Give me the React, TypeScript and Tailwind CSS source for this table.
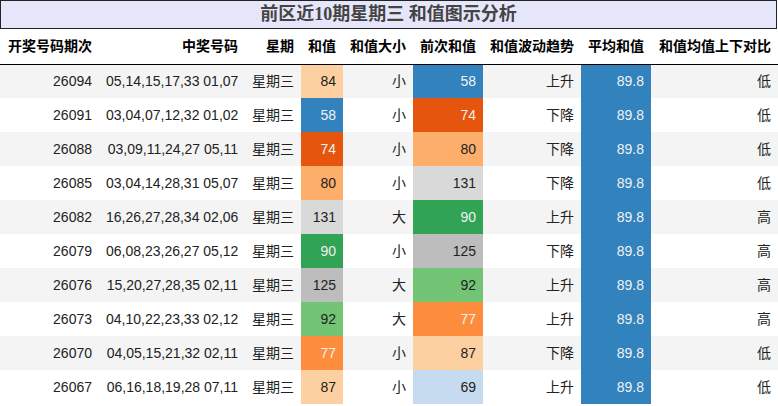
import {FC} from "react";

type Row = {
    issue: string,
    numbers: string,
    week: string,
    sum: number,
    size: string,
    prev: number,
    trend: string,
    avg: string,
    compare: string
}

const rows: Row[] = [
    {issue: "26094", numbers: "05,14,15,17,33 01,07", week: "星期三", sum: 84, size: "小", prev: 58, trend: "上升", avg: "89.8", compare: "低"},
    {issue: "26091", numbers: "03,04,07,12,32 01,02", week: "星期三", sum: 58, size: "小", prev: 74, trend: "下降", avg: "89.8", compare: "低"},
    {issue: "26088", numbers: "03,09,11,24,27 05,11", week: "星期三", sum: 74, size: "小", prev: 80, trend: "下降", avg: "89.8", compare: "低"},
    {issue: "26085", numbers: "03,04,14,28,31 05,07", week: "星期三", sum: 80, size: "小", prev: 131, trend: "下降", avg: "89.8", compare: "低"},
    {issue: "26082", numbers: "16,26,27,28,34 02,06", week: "星期三", sum: 131, size: "大", prev: 90, trend: "上升", avg: "89.8", compare: "高"},
    {issue: "26079", numbers: "06,08,23,26,27 05,12", week: "星期三", sum: 90, size: "小", prev: 125, trend: "下降", avg: "89.8", compare: "高"},
    {issue: "26076", numbers: "15,20,27,28,35 02,11", week: "星期三", sum: 125, size: "大", prev: 92, trend: "上升", avg: "89.8", compare: "高"},
    {issue: "26073", numbers: "04,10,22,23,33 02,12", week: "星期三", sum: 92, size: "大", prev: 77, trend: "上升", avg: "89.8", compare: "高"},
    {issue: "26070", numbers: "04,05,15,21,32 02,11", week: "星期三", sum: 77, size: "小", prev: 87, trend: "下降", avg: "89.8", compare: "低"},
    {issue: "26067", numbers: "06,16,18,19,28 07,11", week: "星期三", sum: 87, size: "小", prev: 69, trend: "上升", avg: "89.8", compare: "低"},
];

// tab20c style colours per value
const cellColor: Record<number, string> = {
    58: "bg-[#3182bd] text-[#f1f1f1]",
    69: "bg-[#c6dbef] text-[#222]",
    74: "bg-[#e6550d] text-[#f1f1f1]",
    77: "bg-[#fd8d3c] text-[#f1f1f1]",
    80: "bg-[#fdae6b] text-[#222]",
    84: "bg-[#fdd0a2] text-[#222]",
    87: "bg-[#fdd0a2] text-[#222]",
    90: "bg-[#31a354] text-[#f1f1f1]",
    92: "bg-[#74c476] text-[#222]",
    125: "bg-[#bdbdbd] text-[#222]",
    131: "bg-[#d9d9d9] text-[#222]",
};

const headers = ["开奖号码期次", "中奖号码", "星期", "和值", "和值大小", "前次和值", "和值波动趋势", "平均和值", "和值均值上下对比"];
const widths = ["w-[99px]", "w-[146px]", "w-[56px]", "w-[42px]", "w-[70px]", "w-[70px]", "w-[98px]", "w-[70px]", "w-[127px]"];

const App: FC = () => {
    return (
        <div className="w-[778px] h-[406px] bg-white overflow-hidden" style={{fontFamily: '"Liberation Sans", "Noto Sans CJK SC", sans-serif'}}>
            <div
                className="h-[29px] w-[777px] border border-[#222] bg-[#e6e6fa] flex items-center justify-center text-[18px] font-bold text-[#444]"
                style={{fontFamily: '"Liberation Serif", "Noto Sans CJK SC", serif'}}
            >
                前区近10期星期三 和值图示分析
            </div>
            <table className="table-fixed border-collapse w-[778px] text-[14px] text-[#222]">
                <colgroup>
                    {widths.map((w, i) => <col key={i} className={w} />)}
                </colgroup>
                <thead>
                    <tr className="h-[35px] border-b border-black">
                        {headers.map((h, i) => (
                            <th key={i} className="px-[7px] text-right font-bold text-black whitespace-nowrap">{h}</th>
                        ))}
                    </tr>
                </thead>
                <tbody>
                    {rows.map((r, i) => (
                        <tr key={r.issue} className={i % 2 === 0 ? "h-[34px] bg-[#f4f4f4]" : "h-[34px] bg-white"}>
                            <td className="px-[7px] text-right">{r.issue}</td>
                            <td className="px-[7px] text-right whitespace-nowrap">{r.numbers}</td>
                            <td className="px-[7px] text-right">{r.week}</td>
                            <td className={`px-[7px] text-right ${cellColor[r.sum]}`}>{r.sum}</td>
                            <td className="px-[7px] text-right">{r.size}</td>
                            <td className={`px-[7px] text-right ${cellColor[r.prev]}`}>{r.prev}</td>
                            <td className="px-[7px] text-right">{r.trend}</td>
                            <td className="px-[7px] text-right bg-[#3182bd] text-[#f1f1f1]">{r.avg}</td>
                            <td className="px-[7px] text-right">{r.compare}</td>
                        </tr>
                    ))}
                </tbody>
            </table>
        </div>
    )
}

export default App;
